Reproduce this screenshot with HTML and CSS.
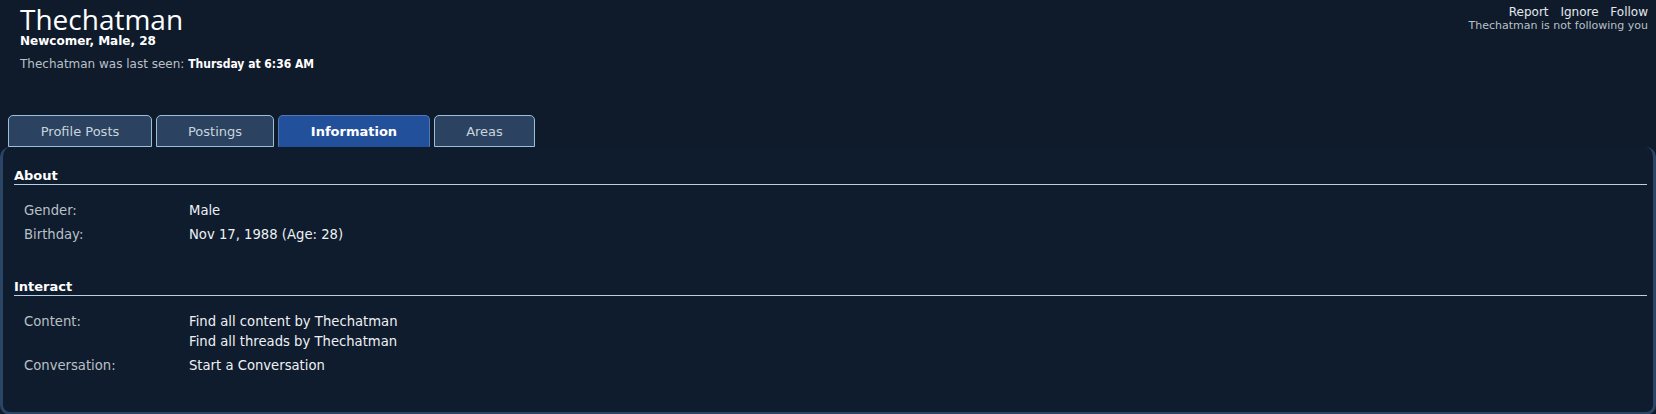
FILE: index.html
```html
<!DOCTYPE html>
<html lang="en">
<head>
    <meta charset="UTF-8">
    <title>Thechatman</title>
    <link rel="stylesheet" href="styles.css">
</head>
<body>
    <div class="profile-header">
        <div class="who">
            <h1 class="name">Thechatman</h1>
            <div class="user-blurb">Newcomer, Male, 28</div>
            <div class="last-seen">Thechatman was last seen: <b>Thursday at 6:36 AM</b></div>
        </div>
        <div class="user-actions">
            <div class="links">
                <a href="#">Report</a>
                <a href="#">Ignore</a>
                <a href="#">Follow</a>
            </div>
            <div class="follow-status">Thechatman is not following you</div>
        </div>
    </div>

    <ul class="tabs">
        <li class="tab tab-posts"><a href="#">Profile Posts</a></li>
        <li class="tab tab-postings"><a href="#">Postings</a></li>
        <li class="tab tab-info active"><a href="#">Information</a></li>
        <li class="tab tab-areas"><a href="#">Areas</a></li>
    </ul>

    <div class="panel">
        <div class="section">
            <h3>About</h3>
            <dl class="pairs">
                <dt>Gender:</dt>
                <dd>Male</dd>
                <dt>Birthday:</dt>
                <dd>Nov 17, 1988 (Age: 28)</dd>
            </dl>
        </div>
        <div class="section">
            <h3>Interact</h3>
            <dl class="pairs">
                <dt>Content:</dt>
                <dd>
                    <a href="#">Find all content by Thechatman</a>
                    <a href="#">Find all threads by Thechatman</a>
                </dd>
                <dt>Conversation:</dt>
                <dd><a href="#">Start a Conversation</a></dd>
            </dl>
        </div>
    </div>
</body>
</html>
```

FILE: styles.css
```css
body {
    margin: 0;
    background-color: #0f1b2b;
    color: #e6ebf0;
    font-family: "DejaVu Sans", Verdana, sans-serif;
    font-size: 12px;
}
a {
    color: inherit;
    text-decoration: none;
}
.profile-header {
    display: flex;
    justify-content: space-between;
    align-items: flex-start;
    padding: 4px 8px 0 20px;
    height: 111px;
}
.name {
    margin: 0;
    font-family: "Open Sans", sans-serif;
    font-weight: normal;
    font-size: 28px;
    line-height: 30px;
    color: #ffffff;
}
.user-blurb {
    font-weight: bold;
    font-size: 12px;
    line-height: 14px;
    color: #ffffff;
}
.last-seen {
    margin-top: 9px;
    color: #b9c0c8;
}
.last-seen b {
    font-family: "DejaVu Sans Condensed", "DejaVu Sans", sans-serif;
    font-stretch: condensed;
    color: #ffffff;
}
.user-actions {
    text-align: right;
    line-height: 13px;
    padding-top: 2px;
}
.links a {
    margin-left: 8px;
    color: #e4e8ee;
}
.follow-status {
    font-size: 11px;
    color: #b9c0c8;
}
.tabs {
    list-style-type: none;
    display: flex;
    gap: 4px;
    margin: 0;
    padding: 0 0 0 8px;
}
.tab a {
    display: block;
    box-sizing: border-box;
    height: 32px;
    padding-top: 1px;
    line-height: 29px;
    text-align: center;
    background-color: #2b4360;
    border: 1px solid #9cc0dc;
    border-radius: 5px 5px 0 0;
    color: #c9d3de;
    font-size: 13px;
}
.tab-posts a { width: 144px; }
.tab-postings a { width: 118px; }
.tab-info a { width: 152px; }
.tab-areas a { width: 101px; }
.tab.active a {
    background-color: #23509b;
    border-color: #4f79b8;
    border-bottom-color: #23509b;
    color: #ffffff;
    font-weight: bold;
}
.panel {
    background-color: #0f1c2d;
    border: 3px solid #2a4566;
    border-top: 0;
    border-radius: 10px;
    padding: 21px 6px 30px 11px;
    height: 214px;
}
.section h3 {
    margin: 0;
    font-size: 13px;
    line-height: 15px;
    color: #ffffff;
    border-bottom: 1px solid #b9d0e2;
    padding-bottom: 1px;
}
.section + .section {
    margin-top: 36px;
}
.pairs {
    display: grid;
    grid-template-columns: 165px 1fr;
    row-gap: 7px;
    margin: 17px 0 0 10px;
    font-size: 13.2px;
    line-height: 17px;
}
.pairs dt {
    color: #b9c0c8;
}
.pairs dd {
    margin: 0;
    color: #eef1f4;
}
.pairs dd a {
    display: block;
    margin-bottom: 3px;
}
.pairs dd a:last-child {
    margin-bottom: 0;
}
```
